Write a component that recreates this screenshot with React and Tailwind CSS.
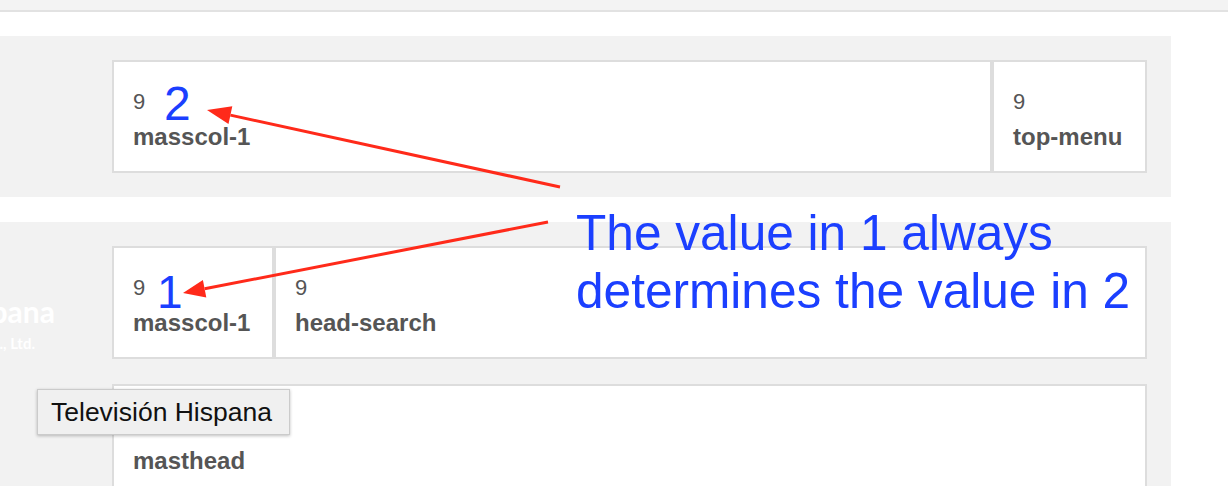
import React from "react";

function Box({ className = "", name, num = "9" }) {
  return (
    <div className={`h-[113px] border-2 border-[#dddddd] bg-white pl-[19px] pt-[29px] text-[#555555] ${className}`}>
      <div className="text-[22px] leading-[22px]">{num}</div>
      <div className="mt-[12px] text-[24px] leading-[24px] font-bold whitespace-nowrap">{name}</div>
    </div>
  );
}

export default function App() {
  return (
    <div className="relative w-[1228px] h-[486px] overflow-hidden bg-white font-['Liberation_Sans',Arial,sans-serif]">
      <div className="h-[12px] bg-[#f3f3f3] border-b-2 border-[#e2e2e2]" />

      <section className="mt-[24px] w-[1171px] bg-[#f2f2f2] flex py-[24px] pr-[24px]">
        <div className="w-[112px] shrink-0" />
        <div className="flex-1 flex">
          <Box className="flex-1" name="masscol-1" />
          <Box className="w-[155px] shrink-0" name="top-menu" />
        </div>
      </section>

      <section className="mt-[25px] w-[1171px] h-[264px] overflow-hidden bg-[#f2f2f2] flex pt-[24px] pr-[24px]">
        <div className="w-[112px] shrink-0">
          <div className="w-[55px] flex flex-col items-end text-white whitespace-nowrap font-['Lato',sans-serif]">
            <div className="mt-[49px] text-[30px] leading-[32px] font-bold">Televisión Hispana</div>
            <div className="mt-[9px] text-[15px] leading-[15px] font-bold mr-[20px]">Televisión Hispana Co., Ltd.</div>
          </div>
        </div>
        <div className="flex-1 flex flex-col gap-[25px]">
          <div className="flex">
            <Box className="w-[162px] shrink-0" name="masscol-1" />
            <Box className="flex-1" name="head-search" />
          </div>
          <Box className="shrink-0 !h-[200px]" name="masthead" />
        </div>
      </section>

      {/* annotations */}
      <div className="absolute left-[164px] top-[80px] text-[48px] leading-[48px] text-[#1b3fff]">2</div>
      <div className="absolute left-[157px] top-[269px] text-[46px] leading-[46px] text-[#1b3fff]">1</div>
      <div className="absolute left-[576px] top-[204px] text-[49.6px] leading-[58px] text-[#1b3fff] whitespace-nowrap">
        <div>The value in 1 always</div>
        <div>determines the value in 2</div>
      </div>
      <svg className="absolute left-0 top-0 pointer-events-none" width="1228" height="486" viewBox="0 0 1228 486">
        <line x1="230.4" y1="115.1" x2="560" y2="187" stroke="#ff2a1a" strokeWidth="3" />
        <polygon points="207,110 228.5,123.9 232.3,106.3" fill="#ff2a1a" />
        <line x1="204.6" y1="288.8" x2="548" y2="222" stroke="#ff2a1a" strokeWidth="3" />
        <polygon points="183,293 206.3,297.6 202.9,280.0" fill="#ff2a1a" />
      </svg>

      {/* tooltip */}
      <div className="absolute left-[37px] top-[389px] w-[253px] border border-[#cbcbcb] bg-[#f0f0f0] shadow-[0_1px_3px_rgba(0,0,0,0.25)] pl-[13px] pt-[1px] text-[26.5px] leading-[43px] text-[#111111] whitespace-nowrap">
        Televisión Hispana
      </div>
    </div>
  );
}
